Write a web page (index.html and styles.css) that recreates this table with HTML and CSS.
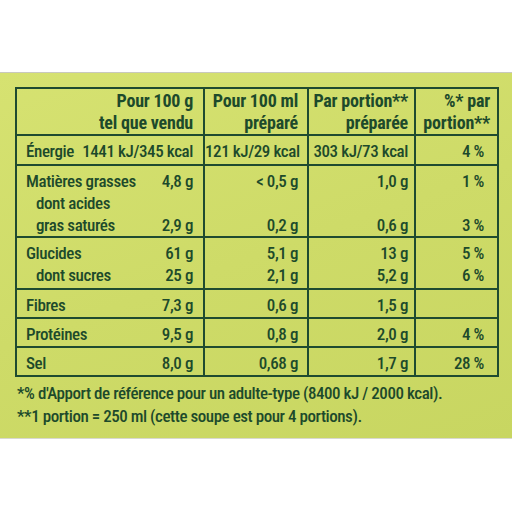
FILE: index.html
```html
<!DOCTYPE html>
<html lang="fr">
<head>
    <meta charset="UTF-8">
    <meta name="viewport" content="width=device-width, initial-scale=1.0">
    <title>Valeurs nutritionnelles</title>
    <link rel="stylesheet" href="styles.css">
</head>
<body>
    <div class="panel">
        <table class="nutri">
            <colgroup>
                <col class="c1">
                <col class="c2">
                <col class="c3">
                <col class="c4">
            </colgroup>
            <tr class="head">
                <th class="col1"><div>Pour 100 g</div><div>tel que vendu</div></th>
                <th class="col2"><div>Pour 100 ml</div><div>préparé</div></th>
                <th class="col3"><div>Par portion**</div><div>préparée</div></th>
                <th class="col4"><div>%* par</div><div>portion**</div></th>
            </tr>
            <tr class="r-energy">
                <td class="col1"><div class="line"><span>Énergie</span><span>1441 kJ/345 kcal</span></div></td>
                <td class="col2"><div>121 kJ/29 kcal</div></td>
                <td class="col3"><div>303 kJ/73 kcal</div></td>
                <td class="col4"><div class="pct">4 %</div></td>
            </tr>
            <tr class="r-fat">
                <td class="col1">
                    <div class="line"><span>Matières grasses</span><span>4,8 g</span></div>
                    <div class="line sub"><span>dont acides</span><span></span></div>
                    <div class="line sub"><span>gras saturés</span><span>2,9 g</span></div>
                </td>
                <td class="col2"><div>&lt; 0,5 g</div><div>&nbsp;</div><div>0,2 g</div></td>
                <td class="col3"><div>1,0 g</div><div>&nbsp;</div><div>0,6 g</div></td>
                <td class="col4"><div class="pct">1 %</div><div>&nbsp;</div><div class="pct">3 %</div></td>
            </tr>
            <tr class="r-carb">
                <td class="col1">
                    <div class="line"><span>Glucides</span><span>61 g</span></div>
                    <div class="line sub"><span>dont sucres</span><span>25 g</span></div>
                </td>
                <td class="col2"><div>5,1 g</div><div>2,1 g</div></td>
                <td class="col3"><div>13 g</div><div>5,2 g</div></td>
                <td class="col4"><div class="pct">5 %</div><div class="pct">6 %</div></td>
            </tr>
            <tr class="r-single">
                <td class="col1"><div class="line"><span>Fibres</span><span>7,3 g</span></div></td>
                <td class="col2"><div>0,6 g</div></td>
                <td class="col3"><div>1,5 g</div></td>
                <td class="col4"><div>&nbsp;</div></td>
            </tr>
            <tr class="r-single">
                <td class="col1"><div class="line"><span>Protéines</span><span>9,5 g</span></div></td>
                <td class="col2"><div>0,8 g</div></td>
                <td class="col3"><div>2,0 g</div></td>
                <td class="col4"><div class="pct">4 %</div></td>
            </tr>
            <tr class="r-single">
                <td class="col1"><div class="line"><span>Sel</span><span>8,0 g</span></div></td>
                <td class="col2"><div>0,68 g</div></td>
                <td class="col3"><div>1,7 g</div></td>
                <td class="col4"><div class="pct">28 %</div></td>
            </tr>
        </table>

        <div class="notes">
            <p>*% d'Apport de référence pour un adulte-type (8400 kJ / 2000 kcal).</p>
            <p>**1 portion = 250 ml (cette soupe est pour 4 portions).</p>
        </div>
    </div>
</body>
</html>
```

FILE: styles.css
```css
* {
    margin: 0;
    padding: 0;
    box-sizing: border-box;
}

body {
    background: #ffffff;
    font-family: 'Roboto', 'Open Sans', sans-serif;
    font-stretch: 75%;
    color: #1d4a2b;
}

.panel {
    margin-top: 72px;
    height: 367px;
    background: linear-gradient(160deg, #d6e271 0%, #cedb68 50%, #c8d661 100%);
    border-top: 1px solid #c9c9bd;
    border-bottom: 1px solid #d8d8d0;
    padding: 14px 0 0 15px;
}

.nutri {
    border-collapse: collapse;
    table-layout: fixed;
    width: 482px;
    font-size: 17px;
    letter-spacing: -0.4px;
    line-height: 22px;
}

.c1 { width: 188px; }
.c2 { width: 104px; }
.c3 { width: 107px; }
.c4 { width: 83px; }

.nutri th,
.nutri td {
    border: 2px solid #1f4b30;
    text-align: right;
    vertical-align: top;
    white-space: nowrap;
}

.nutri th {
    font-size: 18px;
    letter-spacing: -0.2px;
    font-weight: bold;
    padding-top: 1px;
    height: 47px;
}

.nutri td {
    font-weight: 500;
    padding-top: 4px;
}

.col1 { padding: 0 10px 0 9px; }
.col2 { padding-right: 9px; }
.col3 { padding-right: 6px; }
.col4 { padding-right: 7px; }

.pct {
    padding-right: 6px;
}

.line {
    display: flex;
    justify-content: space-between;
}

.line.sub span:first-child {
    padding-left: 10px;
}

.r-energy td { height: 30px; }
.r-fat td { height: 72px; }
.r-carb td { height: 52px; }
.r-single td { height: 29px; }

.notes {
    margin-top: 5px;
    padding-left: 2px;
    font-size: 17px;
    font-weight: 500;
    letter-spacing: -0.45px;
    line-height: 23px;
}
```
